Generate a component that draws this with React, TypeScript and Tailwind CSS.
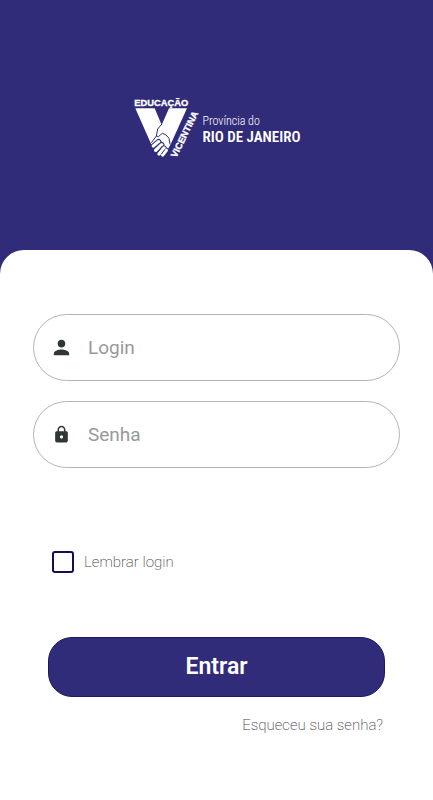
import React, { useState } from 'react';
import { MdLock, MdPerson } from 'react-icons/md';

function VicentinaMark() {
  return (
    <svg
      viewBox="24 24 198 189"
      className="h-[63px] w-[66px] shrink-0 overflow-visible"
      fill="white"
      role="img"
      aria-label="Educação Vicentina"
    >
      <text x="28" y="48" fontSize="28" className="font-['Liberation_Sans',sans-serif] font-bold" stroke="white" strokeWidth="1">
        EDUCAÇÃO
      </text>
      <text
        x="154"
        y="205"
        fontSize="28"
        transform="rotate(-64 154 205)"
        className="font-['Liberation_Sans',sans-serif] font-bold"
        stroke="white"
        strokeWidth="1"
      >
        VICENTINA
      </text>
      {/* V */}
      <path d="M31 55H89L110 105L132 55H186L137 163L126 182L100 186L80 166Z" />
      {/* clasped hands */}
      <g fill="none" strokeLinecap="round" strokeLinejoin="round">
        <g stroke="#312c7a" strokeWidth="16">
          <path d="M85 168L101 155M92 181L110 164M102 192L117 174M113 195L124 181" />
        </g>
        <g stroke="white" strokeWidth="10">
          <path d="M85 168L101 155" />
          <path d="M92 181L110 164" />
          <path d="M102 192L117 174" />
          <path d="M113 195L124 181" />
        </g>
        <g stroke="#312c7a" strokeWidth="3">
          <path d="M110 103L98 117L94 138Q100 144 107 134L112 130Q123 131 132 145L135 162" />
          <path d="M94 138L80 157M91 172L103 160M99 184L112 168M110 191L119 179" />
        </g>
      </g>
    </svg>
  );
}

export default function App() {
  const [login, setLogin] = useState('');
  const [password, setPassword] = useState('');
  const [remember, setRemember] = useState(false);

  const handleSubmit = (e: React.FormEvent) => {
    e.preventDefault();
  };

  return (
    <div className="flex min-h-screen flex-col bg-[#312c7a] font-[Roboto,sans-serif]">
      <header className="flex h-[250px] items-center justify-center gap-1 pt-2">
        <VicentinaMark />
        <div className="font-['Roboto_Condensed',Roboto,sans-serif] text-white">
          <p className="text-[12px] leading-4 font-light">Província do</p>
          <p className="text-[15px] leading-4 font-semibold whitespace-nowrap">RIO DE JANEIRO</p>
        </div>
      </header>

      <main className="flex-1 rounded-t-3xl bg-white pt-16 pb-8">
        <form onSubmit={handleSubmit}>
          <div className="flex flex-col gap-5 px-[33px]">
            <label className="flex h-[67px] items-center rounded-full border border-[#b5b5b5] pr-6 pl-4">
              <MdPerson className="size-[23px] shrink-0 text-[#2f3638]" />
              <input
                type="text"
                value={login}
                onChange={(e) => setLogin(e.target.value)}
                placeholder="Login"
                aria-label="Login"
                className="ml-[15px] min-w-0 flex-1 bg-transparent pt-[2px] text-[19px] text-gray-800 outline-none placeholder:text-[#999999]"
              />
            </label>
            <label className="flex h-[67px] items-center rounded-full border border-[#b5b5b5] pr-6 pl-4">
              <MdLock className="size-[23px] shrink-0 p-[2px] text-[#2f3638]" />
              <input
                type="password"
                value={password}
                onChange={(e) => setPassword(e.target.value)}
                placeholder="Senha"
                aria-label="Senha"
                className="ml-[15px] min-w-0 flex-1 bg-transparent pt-[2px] text-[19px] text-gray-800 outline-none placeholder:text-[#999999]"
              />
            </label>
          </div>

          <div className="px-12">
            <label className="mt-[83px] flex w-fit items-center gap-[10px] pl-1 text-[15px] leading-[22px] font-extralight text-[#444444]">
              <input
                type="checkbox"
                checked={remember}
                onChange={(e) => setRemember(e.target.checked)}
                className="size-[22px] appearance-none rounded-[3px] border-2 border-[#130f57] bg-white checked:bg-[#312c7a]"
              />
              Lembrar login
            </label>

            <button
              type="submit"
              className="mt-16 h-[60px] w-full rounded-3xl border border-[#1d1861] bg-[#312c7a] text-[23px] font-semibold text-white"
            >
              Entrar
            </button>

            <div className="mt-4 pr-[2px] text-right">
              <a href="#" className="text-[15px] leading-6 font-extralight text-[#444444]">
                Esqueceu sua senha?
              </a>
            </div>
          </div>
        </form>
      </main>
    </div>
  );
}
